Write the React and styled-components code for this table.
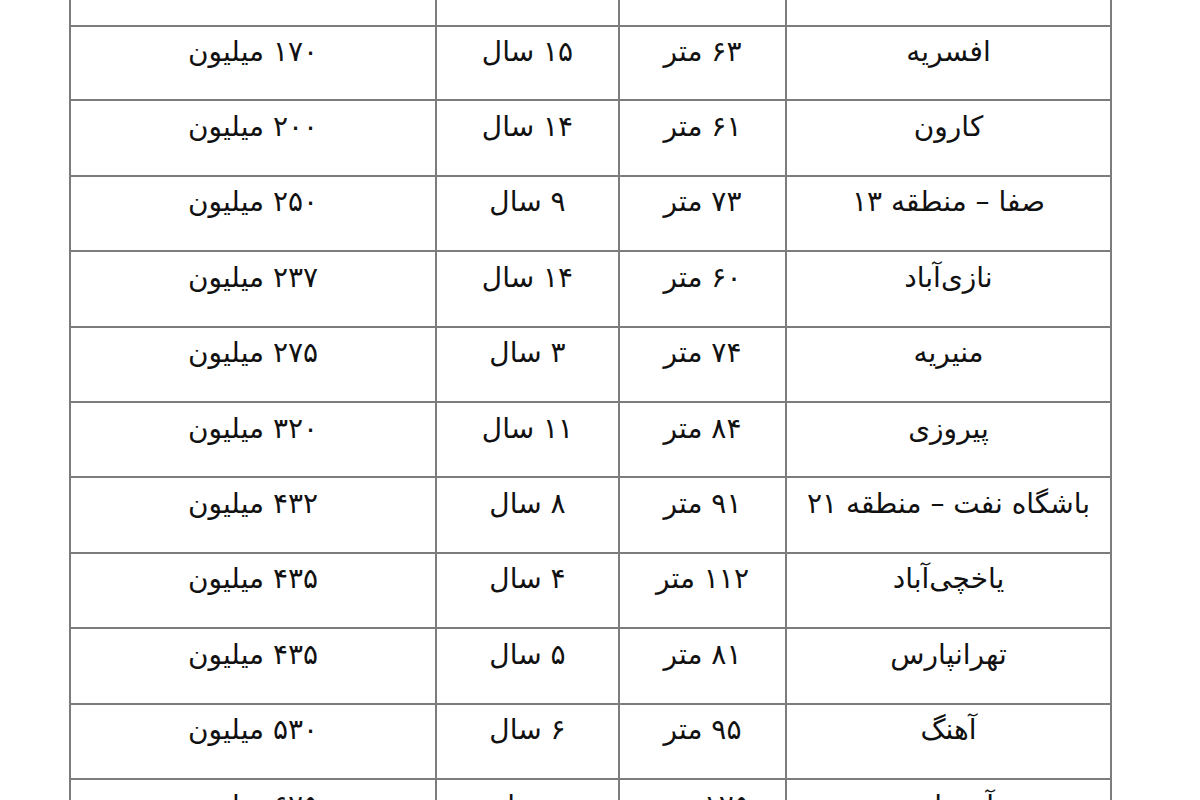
import React from "react";
import styled, { createGlobalStyle } from "styled-components";

const Global = createGlobalStyle`
  html, body { margin: 0; padding: 0; background: #ffffff; }
  body { width: 1200px; height: 800px; overflow: hidden; }
`;

const Page = styled.div`
  width: 1200px;
  height: 800px;
  overflow: hidden;
  background: #ffffff;
  padding-left: 69px;
  box-sizing: border-box;
`;

const Table = styled.table`
  direction: rtl;
  border-collapse: collapse;
  width: 1041px;
  margin-top: -50px;
  table-layout: fixed;
  font-family: "DejaVu Sans", "Liberation Sans", sans-serif;
  color: #111111;
`;

const Col = styled.col`
  width: ${(p) => p.$w}px;
`;

const Row = styled.tr`
  height: ${(p) => p.$h}px;
`;

const Cell = styled.td`
  border: 2px solid #7c7c7c;
  text-align: center;
  vertical-align: middle;
  padding: 0 0 22px 0;
  font-size: 28px;
  line-height: 1;
  white-space: nowrap;
  overflow: hidden;
`;

const rows = [
  ["", "", "", ""],
  ["افسریه", "۶۳ متر", "۱۵ سال", "۱۷۰ میلیون"],
  ["کارون", "۶۱ متر", "۱۴ سال", "۲۰۰ میلیون"],
  ["صفا – منطقه ۱۳", "۷۳ متر", "۹ سال", "۲۵۰ میلیون"],
  ["نازی‌آباد", "۶۰ متر", "۱۴ سال", "۲۳۷ میلیون"],
  ["منیریه", "۷۴ متر", "۳ سال", "۲۷۵ میلیون"],
  ["پیروزی", "۸۴ متر", "۱۱ سال", "۳۲۰ میلیون"],
  ["باشگاه نفت – منطقه ۲۱", "۹۱ متر", "۸ سال", "۴۳۲ میلیون"],
  ["یاخچی‌آباد", "۱۱۲ متر", "۴ سال", "۴۳۵ میلیون"],
  ["تهرانپارس", "۸۱ متر", "۵ سال", "۴۳۵ میلیون"],
  ["آهنگ", "۹۵ متر", "۶ سال", "۵۳۰ میلیون"],
  ["آجودانیه", "۱۲۵ متر", "نوساز", "۶۲۵ میلیون"],
];

export default function App() {
  return (
    <Page>
      <Global />
      <Table>
        <colgroup>
          <Col $w={325} />
          <Col $w={167} />
          <Col $w={183} />
          <Col $w={366} />
        </colgroup>
        <tbody>
          {rows.map((r, i) => (
            <Row key={i} $h={i === 1 ? 74 : 75.4}>
              {r.map((c, j) => (
                <Cell key={j}>{c}</Cell>
              ))}
            </Row>
          ))}
        </tbody>
      </Table>
    </Page>
  );
}
